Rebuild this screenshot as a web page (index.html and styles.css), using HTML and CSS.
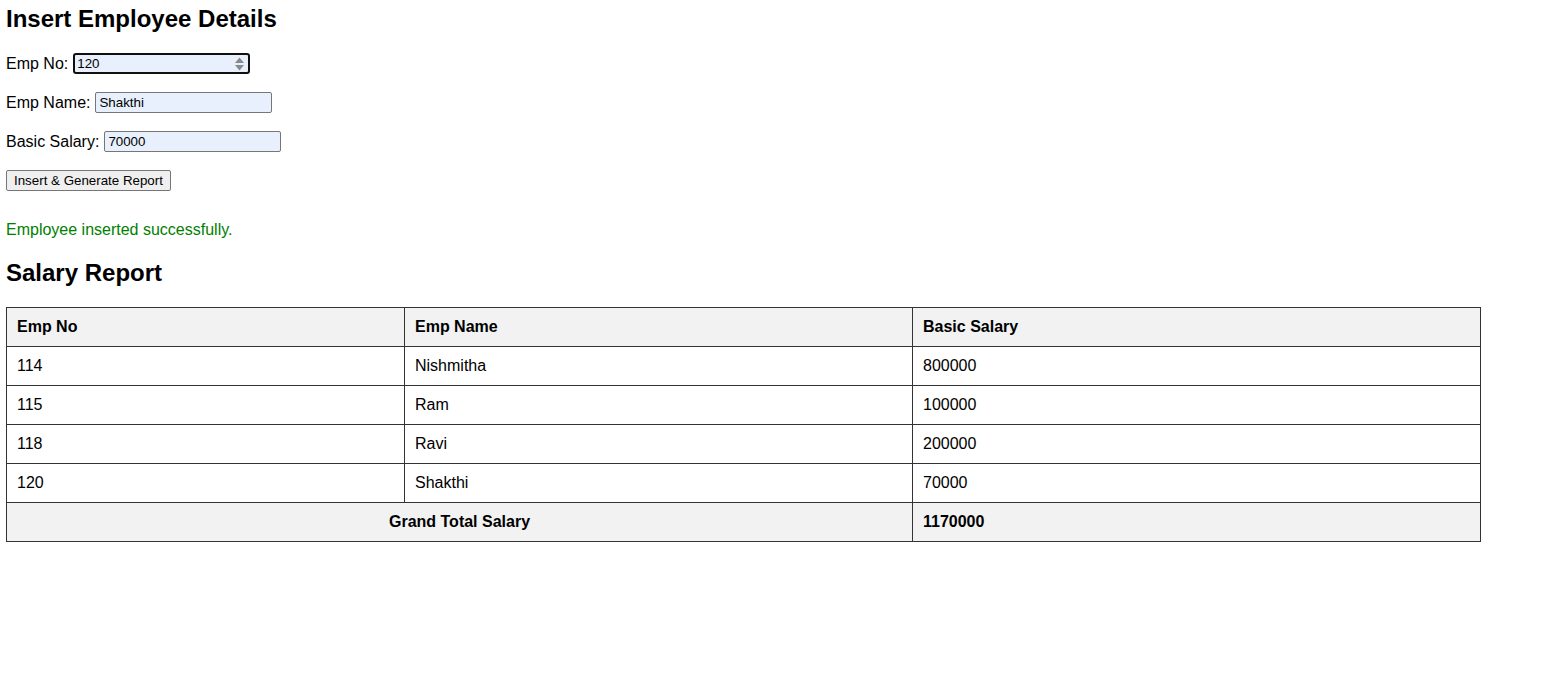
FILE: index.html
```html
<!DOCTYPE html>
<html>
<head>
<meta charset="utf-8">
<title>Insert Employee Details</title>
<link rel="stylesheet" href="styles.css">
</head>
<body>
<h2 class="title">Insert Employee Details</h2>
<form class="emp-form">
  <div class="row"><label>Emp No:</label>
    <div class="field focused"><span class="val">120</span><span class="spin"><svg width="11" height="16" viewBox="0 0 11 16"><path d="M5.5 1.5 L10 7 L1 7 Z" fill="#8a8a8a"/><path d="M5.5 14.5 L10 9 L1 9 Z" fill="#8a8a8a"/></svg></span></div>
  </div>
  <div class="row"><label>Emp Name:</label><div class="field"><span class="val">Shakthi</span></div></div>
  <div class="row"><label>Basic Salary:</label><div class="field"><span class="val">70000</span></div></div>
  <div class="row"><button type="button" class="btn">Insert &amp; Generate Report</button></div>
</form>
<p class="msg">Employee inserted successfully.</p>
<h2 class="title report">Salary Report</h2>
<table class="report-table">
  <colgroup><col class="c1"><col class="c2"><col class="c3"></colgroup>
  <thead>
    <tr><th>Emp No</th><th>Emp Name</th><th>Basic Salary</th></tr>
  </thead>
  <tbody>
    <tr><td>114</td><td>Nishmitha</td><td>800000</td></tr>
    <tr><td>115</td><td>Ram</td><td>100000</td></tr>
    <tr><td>118</td><td>Ravi</td><td>200000</td></tr>
    <tr><td>120</td><td>Shakthi</td><td>70000</td></tr>
  </tbody>
  <tfoot>
    <tr><th colspan="2" class="total-label">Grand Total Salary</th><th>1170000</th></tr>
  </tfoot>
</table>
</body>
</html>
```
FILE: styles.css
```css
html, body { background: #fff; }
body {
  margin: 0;
  padding: 5px 6px;
  font-family: "Liberation Sans", Arial, sans-serif;
  font-size: 16px;
  color: #000;
}
.title {
  font-size: 24px;
  font-weight: bold;
  margin: 0;
  line-height: 28px;
}
.emp-form {
  display: flex;
  flex-direction: column;
  gap: 18px;
  margin-top: 20px;
}
.row {
  display: flex;
  align-items: center;
  height: 21px;
}
.row label { margin-right: 5px; line-height: 18px; }
.field {
  box-sizing: border-box;
  width: 177px;
  height: 21px;
  border: 1px solid #767676;
  border-radius: 2px;
  background: #e8f0fe;
  display: flex;
  align-items: center;
  padding: 0 3px;
  font-size: 13.333px;
  color: #000;
}
.field.focused {
  border: 2px solid #101010;
  border-radius: 3px;
  padding: 0 2px;
}
.val { flex: 1; line-height: 15px; }
.spin { display: flex; align-items: center; margin-right: 1px; }
.btn {
  font-family: "Liberation Sans", Arial, sans-serif;
  font-size: 13.333px;
  height: 21px;
  padding: 1px 7px;
  border: 1px solid #767676;
  border-radius: 2px;
  background: #efefef;
  color: #000;
}
.msg {
  color: #008000;
  margin: 30px 0 0;
  line-height: 18px;
}
.report { margin-top: 20px; }
.report-table {
  margin-top: 20px;
  border-collapse: collapse;
  table-layout: fixed;
  width: 1474px;
}
.c1 { width: 398px; }
.c2 { width: 508px; }
.c3 { width: 568px; }
.report-table th, .report-table td {
  border: 1px solid #333;
  padding: 10px;
  text-align: left;
  line-height: 18px;
  height: 18px;
}
.report-table thead th, .report-table tfoot th { background: #f2f2f2; font-weight: bold; }
.report-table .total-label { text-align: center; }
```
